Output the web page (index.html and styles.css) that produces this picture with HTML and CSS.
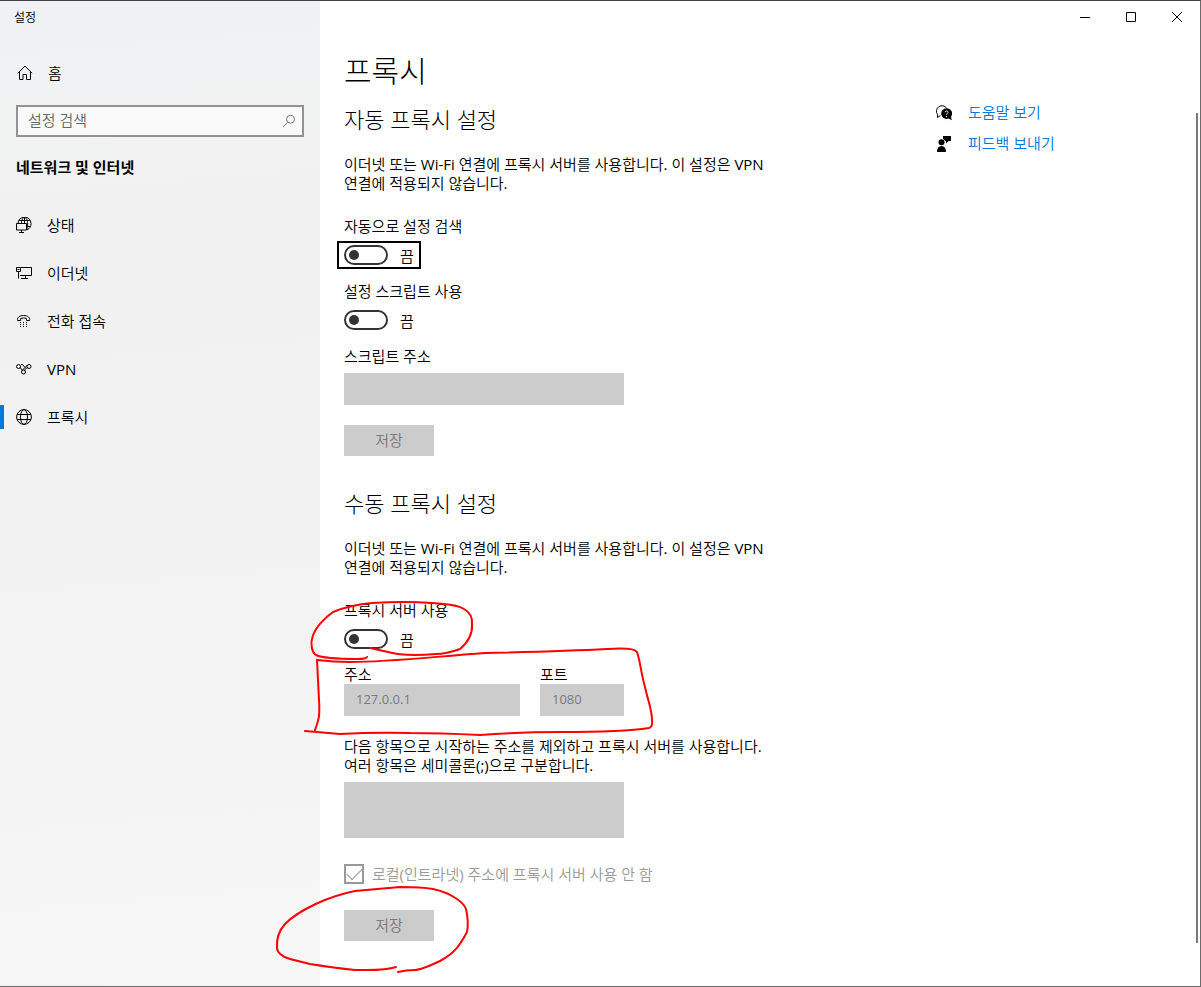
FILE: index.html
```html
<!DOCTYPE html>
<html lang="ko">
  <head>
    <meta charset="UTF-8" />
    <meta name="viewport" content="width=device-width, initial-scale=1.0" />
    <title>설정</title>
    <link rel="stylesheet" href="styles.css">
  </head>
  <body>
    <div class="window">
      <aside class="sidebar">
        <div class="app-title">설정</div>
        <a class="nav-link home" href="#home">
          <svg class="icon" viewBox="0 0 16 16"><path d="M1 8.200L8 1l7 7.200M2.500 6.500v8h3.500v-5h3.500v5h4v-8" /></svg>
          홈
        </a>
        <div class="search">
          <input type="text" placeholder="설정 검색" aria-label="설정 검색" />
          <svg class="search-icon" viewBox="0 0 14 14"><circle cx="8.500" cy="5.200" r="4" /><path d="M5.700 8.200L1 13" /></svg>
        </div>
        <h3>네트워크 및 인터넷</h3>
        <nav>
          <a class="nav-link" href="#status">
            <svg class="icon" viewBox="0 0 16 16">
              <path d="M2 6.500A6.500 6.500 0 0 1 15 6.500A6.500 6.500 0 0 1 11 12.800M3.200 3.500h10.600M10.500 9.500h4M5.300 6.500C5.500 3 6.800.5 8.500.5s3.200 2.800 3.200 6.500c0 2-.3 3.800-1 5" />
              <path d="M.5 6.500h10v6.500H.5zM5.500 13v2M3 15.500h5M8.500.5v6" />
            </svg>
            상태
          </a>
          <a class="nav-link" href="#ethernet">
            <svg class="icon" viewBox="0 0 16 16">
              <path d="M5 2.500h10.500v8H4M9.500 10.500v3M5 13.500h7M.5 2.500h4v4h-4zM2.500 6.500v7" />
              <path d="M1.500 4.500h2" />
            </svg>
            이더넷
          </a>
          <a class="nav-link" href="#dialup">
            <svg class="icon" viewBox="0 0 16 16">
              <path d="M1.600 7.500c-.8-3 2-5 6-5s6.800 2 6 5h-3.100V5.500c-1.800-.6-4-.6-5.800 0v2z" />
              <path d="M4 9.500h1m2 0h1m2 0h1M4 11.500h1m2 0h1m2 0h1M4 13.500h1m2 0h1m2 0h1" />
            </svg>
            전화 접속
          </a>
          <a class="nav-link" href="#vpn">
            <svg class="icon" viewBox="0 0 16 16">
              <circle cx="2.500" cy="5.500" r="2" /><circle cx="13" cy="5.500" r="2" /><circle cx="7.500" cy="11" r="2" />
              <path d="M4 7c1.500.2 1.500 1 2 2.500M5 3.500h1.500l2.500 3M11.500 4L6.500 9M11.500 7c-2 .2-2.300 1-2.700 2.500" />
            </svg>
            VPN
          </a>
          <a class="nav-link active" href="#proxy">
            <svg class="icon" viewBox="0 0 16 16">
              <circle cx="8" cy="8" r="7.400" /><ellipse cx="8" cy="8" rx="3.500" ry="7.400" />
              <path d="M1.300 5.500h13.400M1.300 10.500h13.400" />
            </svg>
            프록시
          </a>
        </nav>
      </aside>

      <main class="main">
        <div class="titlebar">
          <button type="button" aria-label="최소화"><svg viewBox="0 0 10 10"><path d="M0 5.500h10" /></svg></button>
          <button type="button" aria-label="최대화"><svg viewBox="0 0 10 10"><path d="M.5.5h9v9h-9z" /></svg></button>
          <button type="button" aria-label="닫기"><svg viewBox="0 0 10 10"><path d="M0 0l10 10M10 0L0 10" /></svg></button>
        </div>

        <div class="page">
          <div class="content">
            <h1>프록시</h1>

            <section>
              <h2>자동 프록시 설정</h2>
              <p>이더넷 또는 Wi-Fi 연결에 프록시 서버를 사용합니다. 이 설정은 VPN 연결에 적용되지 않습니다.</p>
              <div class="setting">
                <label for="autoDetect">자동으로 설정 검색</label>
                <div class="toggle focused"><input type="checkbox" id="autoDetect" /><span>끔</span></div>
              </div>
              <div class="setting">
                <label for="useScript">설정 스크립트 사용</label>
                <div class="toggle"><input type="checkbox" id="useScript" /><span>끔</span></div>
              </div>
              <div class="setting script">
                <label for="scriptUrl">스크립트 주소</label>
                <input type="text" class="field" id="scriptUrl" disabled />
              </div>
              <button type="button" class="btn" disabled>저장</button>
            </section>

            <section class="manual">
              <h2>수동 프록시 설정</h2>
              <p>이더넷 또는 Wi-Fi 연결에 프록시 서버를 사용합니다. 이 설정은 VPN 연결에 적용되지 않습니다.</p>
              <div class="setting">
                <label for="useProxy">프록시 서버 사용</label>
                <div class="toggle"><input type="checkbox" id="useProxy" /><span>끔</span></div>
              </div>
              <div class="address">
                <div>
                  <label for="address">주소</label>
                  <input type="text" class="field" id="address" value="127.0.0.1" disabled />
                </div>
                <div>
                  <label for="port">포트</label>
                  <input type="text" class="field" id="port" value="1080" disabled />
                </div>
              </div>
              <label for="exceptions">다음 항목으로 시작하는 주소를 제외하고 프록시 서버를 사용합니다. 여러 항목은 세미콜론(;)으로 구분합니다.</label>
              <textarea class="field" id="exceptions" disabled></textarea>
              <div class="check">
                <input type="checkbox" id="localBypass" checked disabled />
                <label for="localBypass">로컬(인트라넷) 주소에 프록시 서버 사용 안 함</label>
              </div>
              <button type="button" class="btn" disabled>저장</button>
            </section>
          </div>

          <div class="help">
            <a href="#help">
              <svg viewBox="0 0 16 16">
                <path class="line" d="M4.500 10.500L1.500 12.500V9.500A5 5 0 1 1 10.500 3" />
                <path d="M10.500 3.300a5.300 5.300 0 1 0 2 10.200l3.300 1.800-.8-3.500a5.300 5.300 0 0 0-4.500-8.500z" />
                <path class="mark" d="M9 7.300c.2-2 3.400-1.700 3 .2-.2.900-1.400 1-1.400 2.200M10.600 11v1.200" />
              </svg>
              도움말 보기
            </a>
            <a href="#feedback">
              <svg viewBox="0 0 16 16">
                <circle cx="5.500" cy="6.300" r="3" />
                <path d="M1 16c0-4 1.500-6 4.500-6s4.500 2 4.500 6zM7 0h8v5h-2.500L10 7.500V5H9.200L7 2.500z" />
              </svg>
              피드백 보내기
            </a>
          </div>
        </div>
        <div class="scrollbar"></div>
      </main>

      <!-- pen marks -->
      <svg class="marks" viewBox="0 0 700 987">
        <path d="M367 657Q366 659 357 659C335 659 322 658 316 655C311 652 311 642 312 639C314 629 321 621 333 612C345 607 360 604 372 603Q405 601 432 603C448 604 458 605 464 609Q473 614 472 624Q473 638 460 649Q446 654 436 654C410 656 395 654 388 652L370 648" />
        <path d="M315 730C319 719 320 716 319 700L317 660Q334 662 350 662C390 662 430 657 485 653C530 652 570 651 607 649Q634 647 637 652C640 660 641 673 645 687C648 701 652 710 652 720Q653 727 649 728C630 731 610 732 560 732Q520 732 480 735C460 734 440 733 410 733Q375 732 340 734L305 731" />
        <path d="M396 967C385 971 370 970 355 970Q335 968 310 964L290 959C282 957 277 952 277 948Q276 934 285 924C300 909 330 896 355 891Q378 889 400 887Q422 887 433 889C452 893 464 903 466 909Q469 922 467 932C460 945 455 953 440 961C425 968 420 970 415 970Q406 970 398 972" />
      </svg>
    </div>
  </body>
</html>
```
FILE: styles.css
```css
* {
  box-sizing: border-box;
}
body {
  margin: 0;
  font-family: "Open Sans", "Noto Sans CJK KR DemiLight", "Noto Sans CJK KR", sans-serif;
  font-size: 15px;
  line-height: 19px;
  color: #000;
  word-break: keep-all;
}
h1,
h2,
h3,
p {
  margin: 0;
}
h1,
h2,
h3 {
  font-family: "Open Sans", "Noto Sans CJK KR", sans-serif;
}
a {
  text-decoration: none;
}
button,
input,
textarea {
  font: inherit;
}
input,
button {
  margin: 0;
}
svg {
  fill: none;
  stroke: #000;
}
.window {
  position: relative;
  display: flex;
  min-height: 100vh;
  border-top: 1px solid #434343;
  border-right: 1px solid #6b6b6b;
  border-bottom: 1px solid #6b6b6b;
}

/* sidebar */
.sidebar {
  width: 320px;
  flex-shrink: 0;
  background: linear-gradient(175deg, #eff1f4 0%, #f1f2f2 12%, #f2f1f1 25%, #f2f2f2 50%, #f6f6f6 100%);
}
.app-title {
  padding: 7px 14px;
  margin-bottom: 15px;
  font-size: 12px;
}
.nav-link {
  display: flex;
  align-items: center;
  gap: 15px;
  height: 48px;
  padding-left: 16px;
  color: #000;
}
.nav-link.home {
  padding-left: 17px;
}
.nav-link.active {
  background: linear-gradient(#0078d7, #0078d7) 0 center / 4px 24px no-repeat;
}
.icon {
  width: 16px;
  height: 16px;
}
.search {
  position: relative;
  margin: 8px 16px 21px;
}
.search input {
  display: block;
  width: 100%;
  height: 32px;
  padding: 0 36px 2px 10px;
  border: 2px solid #929292;
  background: #f9f9f9;
}
.search input::placeholder {
  color: #666;
  opacity: 1;
}
.search-icon {
  position: absolute;
  right: 8px;
  top: 9px;
  width: 14px;
  height: 14px;
  stroke: #777;
}
.sidebar h3 {
  padding-left: 16px;
  margin-bottom: 24px;
  font-size: 15px;
  font-weight: 700;
}

/* main */
.main {
  position: relative;
  flex: 1;
  background: #fff;
}
.titlebar {
  display: flex;
  justify-content: flex-end;
}
.titlebar button {
  display: flex;
  align-items: center;
  justify-content: center;
  width: 46px;
  height: 32px;
  padding: 0;
  border: none;
  background: none;
}
.titlebar svg {
  width: 10px;
  height: 10px;
}
.page {
  display: flex;
  gap: 152px;
  padding: 18px 24px 40px;
}
.content {
  width: 440px;
}
h1 {
  font-size: 30px;
  font-weight: 300;
  line-height: 40px;
  margin-bottom: 14px;
}
h2 {
  font-size: 22px;
  font-weight: 300;
  line-height: 28px;
  margin-bottom: 22px;
}
.content p {
  margin-bottom: 24px;
}
.content label {
  display: block;
}
.setting {
  margin-bottom: 17px;
}
.toggle {
  display: flex;
  align-items: center;
  gap: 12px;
  width: max-content;
  height: 20px;
  margin-top: 9px;
}
.toggle input {
  appearance: none;
  display: flex;
  align-items: center;
  width: 44px;
  height: 20px;
  padding-left: 3px;
  border: 2px solid #333;
  border-radius: 10px;
}
.toggle input::before {
  content: "";
  width: 10px;
  height: 10px;
  border-radius: 50%;
  background: #333;
}
.toggle span {
  padding-top: 2px;
}
.toggle.focused {
  margin-left: -3px;
  padding: 0 3px;
  outline: 2px solid #000;
  outline-offset: 2px;
}
.field {
  display: block;
  width: 280px;
  height: 32px;
  padding: 0 12px 2px;
  border: none;
  border-radius: 0;
  background: #ccc;
  color: #7a7a7a;
  font-size: 13px;
  resize: none;
}
.script {
  margin-bottom: 20px;
}
.script .field {
  margin-top: 7px;
}
.btn {
  display: block;
  width: 90px;
  height: 31px;
  padding: 0;
  border: none;
  background: #ccc;
  color: #7a7a7a;
}
.manual {
  margin-top: 33px;
}
.address {
  display: flex;
  gap: 20px;
  margin: -1px 0 21px;
}
#address {
  width: 176px;
}
#port {
  width: 84px;
}
textarea.field {
  height: 56px;
  margin-top: 7px;
}
.check {
  display: flex;
  align-items: center;
  gap: 8px;
  margin: 26px 0;
  height: 20px;
  color: #999;
}
.check input {
  appearance: none;
  width: 20px;
  height: 20px;
  border: 2px solid #999;
}
.check input:checked::before {
  content: "";
  display: block;
  width: 14px;
  height: 7px;
  margin: 2px 0 0 1px;
  border-left: 1px solid #999;
  border-bottom: 1px solid #999;
  transform: rotate(-45deg);
}

.help {
  display: flex;
  flex-direction: column;
  gap: 12px;
  padding-top: 52px;
}
.help a {
  display: flex;
  align-items: center;
  gap: 16px;
  color: #0078d7;
}
.help svg {
  width: 16px;
  height: 16px;
  fill: #000;
  stroke: none;
}
.help .line {
  fill: none;
  stroke: #000;
}
.help .mark {
  fill: none;
  stroke: #fff;
}
.scrollbar {
  position: absolute;
  top: 112px;
  right: 2px;
  bottom: 43px;
  width: 2px;
  background: #7a7a7a;
}
.marks {
  position: absolute;
  top: -1px;
  left: 0;
  width: 700px;
  height: 987px;
  stroke: #f00;
  stroke-width: 2;
  stroke-linecap: round;
  pointer-events: none;
}
```
